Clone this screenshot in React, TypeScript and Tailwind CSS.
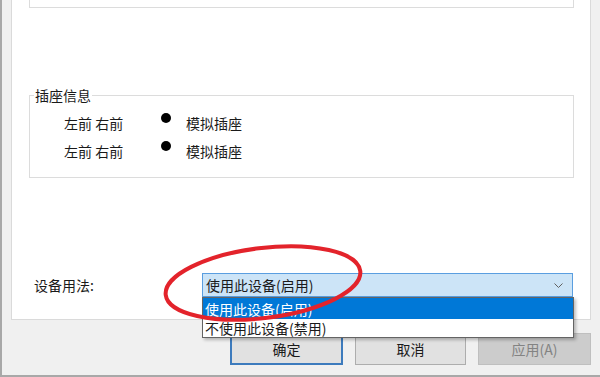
import React from 'react';

const socketRows = [
  { channels: '左前 右前', type: '模拟插座' },
  { channels: '左前 右前', type: '模拟插座' },
];

const App: React.FC = () => {
  return (
    <div className="relative w-[600px] h-[377px] overflow-hidden bg-[#f0f0f0] border-l-2 border-b-2 border-[#a8a8a8] pl-[9px] pr-[9px] text-[14px] text-[#1a1a1a] font-['Noto_Sans_CJK_SC',sans-serif]">
      {/* White property page */}
      <div className="h-[320px] bg-white border-x border-b border-[#dadada] pl-[17px] pr-[16px] flex flex-col">
        {/* Previous group box (cut off at top) */}
        <div className="h-[8px] border-x border-b border-[#dcdcdc]" />

        {/* 插座信息 */}
        <div className="relative mt-[87px] h-[83px] border border-[#dcdcdc] pt-[13px] pl-[34px]">
          <span className="absolute -top-[11px] left-[4px] bg-white px-[1px] leading-[20px]">插座信息</span>
          {socketRows.map((row, i) => (
            <div key={i} className="flex items-center h-[28px]">
              <span className="w-[97px] leading-[20px]">{row.channels}</span>
              <span className="w-[10px] h-[10px] rounded-full bg-black -mt-[10px]" />
              <span className="ml-[15px] leading-[20px]">{row.type}</span>
            </div>
          ))}
        </div>

        {/* 设备用法 */}
        <div className="flex items-center mt-[95px] pl-[5px]">
          <span className="w-[168px] leading-[20px]">设备用法:</span>
          <div className="relative w-[371px]">
            <div className="h-[24px] bg-[#cce4f7] border border-[#5a9ee0] flex items-center pl-[3px] pr-[9px]">
              <span className="flex-1 leading-[20px]">使用此设备(启用)</span>
              <svg width="9" height="6" viewBox="0 0 9 6" className="mt-[1px]">
                <path d="M0.5 0.5 L4.5 4.5 L8.5 0.5" fill="none" stroke="#606060" strokeWidth="1" />
              </svg>
            </div>
            {/* Open drop-down list */}
            <div className="absolute left-0 top-[24px] w-[372px] z-10 bg-white border border-[#646464] shadow-[2px_2px_3px_rgba(0,0,0,0.25)]">
              <div className="h-[21px] bg-[#0078d7] text-white flex items-center pl-[2px] leading-[20px]">使用此设备(启用)</div>
              <div className="h-[19px] flex items-center pl-[2px] leading-[18px] -mt-[1px]">不使用此设备(禁用)</div>
            </div>
          </div>
        </div>
      </div>

      {/* Dialog buttons */}
      <div className="flex justify-end gap-[12px] mt-[13px]">
        <button className="w-[113px] h-[32px] bg-[#e1e1e1] border-2 border-[#3d7bbd] leading-[20px]">确定</button>
        <button className="w-[111px] h-[32px] bg-[#e1e1e1] border border-[#adadad] leading-[20px]">取消</button>
        <button disabled className="w-[113px] h-[32px] bg-[#cccccc] border border-[#bfbfbf] text-[#838383] leading-[20px]">应用(A)</button>
      </div>

      {/* Red annotation ellipse */}
      <svg className="absolute left-0 top-0 pointer-events-none z-20" width="600" height="377">
        <ellipse cx="261" cy="283" rx="98" ry="35" transform="rotate(-7 261 283)" fill="none" stroke="#e3232b" strokeWidth="4" />
      </svg>
    </div>
  );
};

export default App;
